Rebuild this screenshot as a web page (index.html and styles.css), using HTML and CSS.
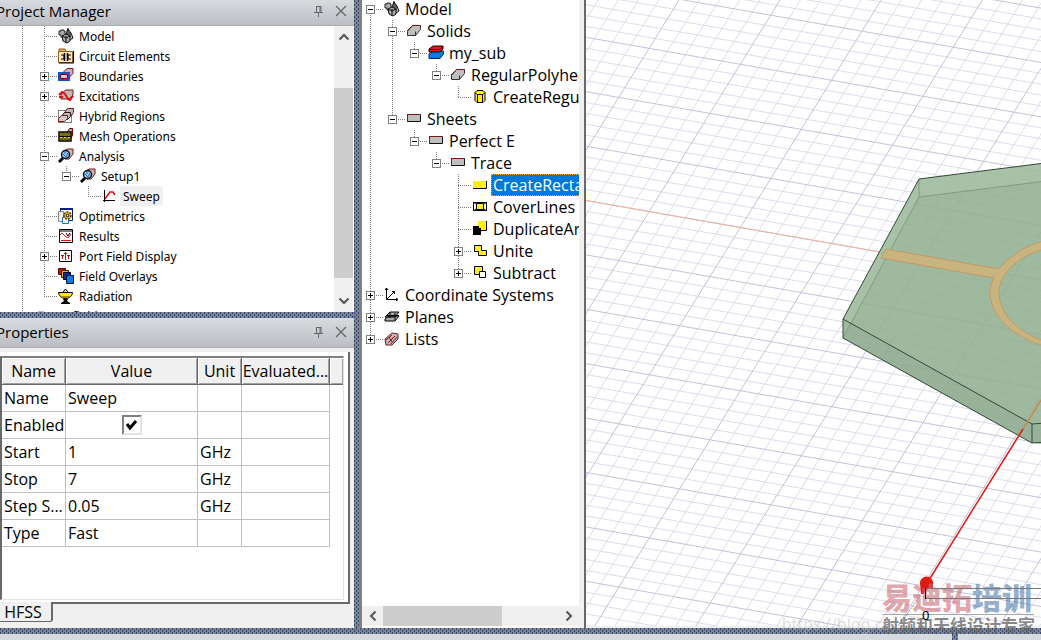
FILE: index.html
```html
<!DOCTYPE html>
<html lang="en">
<head>
<meta charset="utf-8">
<title>Project Manager</title>
<link rel="stylesheet" href="styles.css">
</head>
<body>
<svg class="defs" aria-hidden="true">
  <symbol id="i-model" viewBox="0 0 16 16"><path d="M1 3h2V2h3v1h1v3h1v5H5V9H3V7H1z" fill="#aaa" stroke="#222"/><path d="M10 1l3 4 2 5-3 2-4-3 1-6z" fill="#bbb" stroke="#111"/><path d="M4 8l4-2 4 2v5l-3 2-4-2zM4 8l4 2 4-2M8 10v5" fill="#aaa" stroke="#111"/><path d="M10 0v7M12 4v5" stroke="#000"/></symbol>
  <symbol id="i-circuit" viewBox="0 0 16 16"><path d="M1 3V1h6l1 2" fill="#e8b060" stroke="#8a5510"/><path d="M.5 3.500h14v11H.5z" fill="#ffe9c4" stroke="#9a5b10"/><path d="M1 15h14.500V3" fill="none" stroke="#000"/><path d="M3 7h3v4H3M13 7h-3v4h3" fill="none" stroke="#000"/><path d="M6.500 5v8M9.500 5v8" fill="none" stroke="#000" stroke-width="1.500"/></symbol>
  <symbol id="i-bound" viewBox="0 0 16 16"><path d="M5 4.500l4-4h6v5l-4 4z" fill="#bbb" stroke="#801515"/><path d="M1 5h10v7H1z" fill="#bbb" stroke="#0755c8" stroke-width="2"/><path d="M2.500 6.500h7v4h-7z" fill="#ccc" stroke="#700"/></symbol>
  <symbol id="i-excite" viewBox="0 0 16 16"><path d="M3 6l5-4h7v5l-4 4H3z" fill="#bbb" stroke="#801515"/><path d="M1 7l3-3 3 2 3 5 2 1 3-4M1 9h4" fill="none" stroke="#e01010" stroke-width="2"/></symbol>
  <symbol id="i-hybrid" viewBox="0 0 16 16"><path d="M.5 2.500h13v12H.5z" fill="none" stroke="#000" stroke-dasharray="1 1"/><path d="M6.500 4.500l3-4h6v4l-3 4h-6z" fill="#bbb" stroke="#801515"/><path d="M3.500 8.500l3-4h6v4l-3 3h-6z" fill="#bbb" stroke="#301010"/><path d="M.5 10.500l3-3h6v3l-3 3h-6z" fill="#ccc" stroke="#801515"/></symbol>
  <symbol id="i-mesh" viewBox="0 0 16 16"><path d="M9.500 3.500l2-3h3v7l-2 3z" fill="#aaa" stroke="#700"/><path d="M1 4h12v9H1z" fill="#f5e51e" stroke="#000" stroke-width="1.500"/><path d="M1 8.500h12M5 4v9M9 4v9" stroke="#000"/><path d="M2 5l2 3M4 5L2 8M6 5l2 3M8 5L6 8M10 5l2 3M12 5l-2 3M2 10l2 2M4 10l-2 2M6 10l2 2M8 10l-2 2M10 10l2 2M12 10l-2 2" stroke="#000" stroke-opacity=".6"/></symbol>
  <symbol id="i-analysis" viewBox="0 0 16 16"><path d="M5 4l4-3h6v5l-4 5H7z" fill="#bbb" stroke="#801515"/><circle cx="7.500" cy="6.500" r="4" fill="#9cc9f0" stroke="#111" stroke-width="1.500"/><path d="M5 6l3 3 2-4M7 3v3" fill="none" stroke="#1565c0"/><path d="M5 10l-4 4" stroke="#000" stroke-width="3"/></symbol>
  <symbol id="i-sweep" viewBox="0 0 16 16"><path d="M2.500 2v12M1 12.500h12" fill="none" stroke="#000"/><path d="M3 11l2-3 3-4h3l2 3" fill="none" stroke="#e01010" stroke-width="1.500"/></symbol>
  <symbol id="i-opti" viewBox="0 0 16 16"><path d="M2.500 1.500h12v11h-12z" fill="#fff" stroke="#051b70"/><path d="M2 1h13" stroke="#06227e" stroke-width="2"/><path d="M.5 3.500h5v10h-5z" fill="#eee" stroke="#888"/><path d="M4.500 9.500h6v6h-6z" fill="#fff" stroke="#147cc0"/><circle cx="9.500" cy="7.500" r="3.500" fill="#f7c51e" stroke="#4a3000" stroke-dasharray="2 1" stroke-width="1.500"/><circle cx="9.500" cy="7.500" r="1.300" fill="#fff" stroke="#000"/></symbol>
  <symbol id="i-results" viewBox="0 0 16 16"><path d="M1.500 1.500h13v13h-13z" fill="#fff" stroke="#000"/><path d="M2 3h12" stroke="#000"/><path d="M2 7l2-2 3 3 3 2 3-4M3 12.500h10" fill="none" stroke="#e01010"/><path d="M8 5l2 3 2-3" fill="none" stroke="#000"/></symbol>
  <symbol id="i-port" viewBox="0 0 16 16"><path d="M1.500 2.500h12v11h-12z" fill="#fff" stroke="#000"/><path d="M4.500 11V7M7.500 12V4M10.500 11V7" stroke="#d00"/><path d="M3 7.500h3M6 5.500h3M9 7.500h3" stroke="#d00"/></symbol>
  <symbol id="i-overlay" viewBox="0 0 16 16"><path d="M.5.5h7v6h-7z" fill="#b51c14" stroke="#600"/><path d="M3.500 2.500h7v7h-7z" fill="#f0b51e" stroke="#320"/><path d="M5.500 4.500h7v7h-7z" fill="#0a2a9b" stroke="#001"/><path d="M8.500 7.500h7v8h-7z" fill="#087ce0" stroke="#013"/></symbol>
  <symbol id="i-rad" viewBox="0 0 16 16"><path d="M.5 4.500h14c0 3-3 5-5 6h-4c-2-1-5-3-5-6z" fill="#ffed00" stroke="#000"/><path d="M3 8h9l-2 2H5z" fill="#b08300"/><path d="M5 4l2.500-3L10 4" fill="#ffed00" stroke="#000"/><path d="M5 11h5l-1 2 3 2v1H3v-1l3-2z" fill="#000"/></symbol>
  <symbol id="i-folder" viewBox="0 0 16 16"><path d="M1 5h14v9H1z" fill="#ddd" stroke="#555"/><path d="M2 4h6l2 3H1z" fill="#ece23c" stroke="#777"/></symbol>
  <symbol id="i-solid" viewBox="0 0 16 16"><path d="M1.500 8.500l5-6h8v4l-5 6h-8z" fill="#bfbfbf" stroke="#333"/><path d="M1 8l5.500-5.500h8M9.500 8.500v4" fill="none" stroke="#801515"/></symbol>
  <symbol id="i-sub" viewBox="0 0 16 16"><path d="M1 9l4-3h10.500v3L12 13.500H1z" fill="#0a79e0" stroke="#05247a"/><path d="M1 4l4-3h10v3l-3 3H1z" fill="#e01b12" stroke="#200"/><path d="M1 4.500h11l3-3" fill="none" stroke="#400"/></symbol>
  <symbol id="i-poly" viewBox="0 0 16 16"><path d="M3 3.500l2-2h6l2 2v8l-2 2H5l-2-2z" fill="#ffed1e" stroke="#000"/><path d="M3 3.500l2 2h6l2-2M5.500 5v9M10.500 5v9" fill="none" stroke="#000"/></symbol>
  <symbol id="i-sheet" viewBox="0 0 16 16"><path d="M1.500 3.500h13v7h-13z" fill="#bfbfbf" stroke="#111"/><path d="M1 3.500h13M1.500 3v8" stroke="#801515"/></symbol>
  <symbol id="i-rect" viewBox="0 0 16 16"><path d="M1 4h13v7H1z" fill="#ffed1e"/><path d="M1 11.500h13.500V4" fill="none" stroke="#000"/></symbol>
  <symbol id="i-cover" viewBox="0 0 16 16"><path d="M1.500 3.500h13v8h-13z" fill="#fff" stroke="#000"/><path d="M4.500 4.500h7v6h-7z" fill="#ffed1e" stroke="#000"/><path d="M1 3l3 2M15 3l-3 2M1 12l3-2M15 12l-3-2" stroke="#000"/></symbol>
  <symbol id="i-dup" viewBox="0 0 16 16"><path d="M6 0h9v9H6z" fill="#ffed1e"/><path d="M14.500 0v9.500H9" fill="none" stroke="#000"/><path d="M1 5h6v2h2v7H1z" fill="#000"/></symbol>
  <symbol id="i-unite" viewBox="0 0 16 16"><path d="M2.500 2.500h7v5h5v5h-8v-4h-4z" fill="#ffed1e" stroke="#000"/></symbol>
  <symbol id="i-subtract" viewBox="0 0 16 16"><path d="M2.500 1.500h8v8h-8z" fill="#ffed1e" stroke="#000"/><path d="M7.500 6.500h6v6h-6z" fill="#fff" stroke="#000"/></symbol>
  <symbol id="i-cs" viewBox="0 0 16 16"><path d="M2.500 1v11.500H14M3 12l7-7M1 3l1.500-2L4 3M8 4.500h2.500V7M12 11l2 1.500-2 1.500" fill="none" stroke="#000"/></symbol>
  <symbol id="i-planes" viewBox="0 0 16 16"><path d="M1 10l4-3h10l-4 5H1zM1 8l5-5h9l-4 5z" fill="#aaa" stroke="#000"/><path d="M2 6.500h13M6 3v6M11 4v7" stroke="#000"/></symbol>
  <symbol id="i-lists" viewBox="0 0 16 16"><path d="M1 8l7-6 6 1v5l-6 6H2z" fill="#bbb" stroke="#801515"/><path d="M2 9l6-5M4 12l7-7M7 13l6-7M5 6l3 5" stroke="#8a1010"/></symbol>
  <symbol id="i-pin" viewBox="0 0 12 12"><path d="M3 1.500h5M3.500 1v6M7 1v6M8 1v6M1 7.500h9M5.500 8v4" fill="none" stroke="#666"/></symbol>
  <symbol id="i-close" viewBox="0 0 12 12"><path d="M1 1l10 10M11 1L1 11" fill="none" stroke="#666" stroke-width="1.300"/></symbol>
  <symbol id="i-chev" viewBox="0 0 12 12"><path d="M1.500 8.500L6 4l4.500 4.500" fill="none" stroke="#555" stroke-width="2"/></symbol>
</svg>

<div class="app">
  <main class="work">
    <aside class="side">
      <section class="pm">
        <header class="bar"><h2>Project Manager</h2><button aria-label="Pin"><svg><use href="#i-pin"/></svg></button><button aria-label="Close"><svg><use href="#i-close"/></svg></button></header>
        <div class="pm-body">
          <ul class="tree small">
            <li><i class="v"></i><i class="t"></i><svg><use href="#i-model"/></svg><span>Model</span></li>
            <li><i class="v"></i><i class="t"></i><svg><use href="#i-circuit"/></svg><span>Circuit Elements</span></li>
            <li><i class="v"></i><i class="t"><b class="plus"></b></i><svg><use href="#i-bound"/></svg><span>Boundaries</span></li>
            <li><i class="v"></i><i class="t"><b class="plus"></b></i><svg><use href="#i-excite"/></svg><span>Excitations</span></li>
            <li><i class="v"></i><i class="t"></i><svg><use href="#i-hybrid"/></svg><span>Hybrid Regions</span></li>
            <li><i class="v"></i><i class="t"></i><svg><use href="#i-mesh"/></svg><span>Mesh Operations</span></li>
            <li><i class="v"></i><i class="t"><b></b></i><svg><use href="#i-analysis"/></svg><span>Analysis</span></li>
            <li><i class="v"></i><i class="v"></i><i class="l"><b></b></i><svg><use href="#i-analysis"/></svg><span>Setup1</span></li>
            <li><i class="v"></i><i class="v"></i><i></i><i class="l"></i><svg><use href="#i-sweep"/></svg><span class="soft">Sweep</span></li>
            <li><i class="v"></i><i class="t"></i><svg><use href="#i-opti"/></svg><span>Optimetrics</span></li>
            <li><i class="v"></i><i class="t"></i><svg><use href="#i-results"/></svg><span>Results</span></li>
            <li><i class="v"></i><i class="t"><b class="plus"></b></i><svg><use href="#i-port"/></svg><span>Port Field Display</span></li>
            <li><i class="v"></i><i class="t"></i><svg><use href="#i-overlay"/></svg><span>Field Overlays</span></li>
            <li><i class="v"></i><i class="l"></i><svg><use href="#i-rad"/></svg><span>Radiation</span></li>
            <li><i class="l"></i><svg><use href="#i-folder"/></svg><span>Definitions</span></li>
          </ul>
          <div class="vscroll"><button aria-label="Scroll up"><svg><use href="#i-chev"/></svg></button><div class="track"><div class="thumb"></div></div><button class="down" aria-label="Scroll down"><svg><use href="#i-chev"/></svg></button></div>
        </div>
      </section>
      <div class="hatch row"></div>
      <section class="props">
        <header class="bar tall"><h2>Properties</h2><button aria-label="Pin"><svg><use href="#i-pin"/></svg></button><button aria-label="Close"><svg><use href="#i-close"/></svg></button></header>
        <div class="sheet">
          <div class="sheet-in">
          <table>
            <colgroup><col class="c1"><col class="c2"><col class="c3"><col class="c4"><col></colgroup>
            <thead><tr><th>Name</th><th>Value</th><th>Unit</th><th>Evaluated...</th><th></th></tr></thead>
            <tbody>
              <tr><td>Name</td><td>Sweep</td><td></td><td></td><td></td></tr>
              <tr><td><label for="en">Enabled</label></td><td class="mid"><input id="en" type="checkbox" checked></td><td></td><td></td><td></td></tr>
              <tr><td>Start</td><td>1</td><td>GHz</td><td></td><td></td></tr>
              <tr><td>Stop</td><td>7</td><td>GHz</td><td></td><td></td></tr>
              <tr><td>Step S...</td><td>0.05</td><td>GHz</td><td></td><td></td></tr>
              <tr><td>Type</td><td>Fast</td><td></td><td></td><td></td></tr>
            </tbody>
          </table>
          </div>
        </div>
        <div class="tabs"><button class="tab">HFSS</button></div>
      </section>
    </aside>
    <div class="hatch col"></div>
    <section class="model">
      <ul class="tree big">
        <li><i class="f"><b></b></i><svg><use href="#i-model"/></svg><span>Model</span></li>
        <li><i class="v"></i><i class="t"><b></b></i><svg><use href="#i-solid"/></svg><span>Solids</span></li>
        <li><i class="v"></i><i class="v"></i><i class="l"><b></b></i><svg><use href="#i-sub"/></svg><span>my_sub</span></li>
        <li><i class="v"></i><i class="v"></i><i></i><i class="l"><b></b></i><svg><use href="#i-solid"/></svg><span>RegularPolyhedron</span></li>
        <li><i class="v"></i><i class="v"></i><i></i><i></i><i class="l"></i><svg><use href="#i-poly"/></svg><span>CreateRegularPolyhedron</span></li>
        <li><i class="v"></i><i class="l"><b></b></i><svg><use href="#i-sheet"/></svg><span>Sheets</span></li>
        <li><i class="v"></i><i></i><i class="l"><b></b></i><svg><use href="#i-sheet"/></svg><span>Perfect E</span></li>
        <li><i class="v"></i><i></i><i></i><i class="l"><b></b></i><svg><use href="#i-sheet"/></svg><span>Trace</span></li>
        <li><i class="v"></i><i></i><i></i><i></i><i class="t"></i><svg><use href="#i-rect"/></svg><span class="sel">CreateRectangle</span></li>
        <li><i class="v"></i><i></i><i></i><i></i><i class="t"></i><svg><use href="#i-cover"/></svg><span>CoverLines</span></li>
        <li><i class="v"></i><i></i><i></i><i></i><i class="t"></i><svg><use href="#i-dup"/></svg><span>DuplicateAroundAxis</span></li>
        <li><i class="v"></i><i></i><i></i><i></i><i class="t"><b class="plus"></b></i><svg><use href="#i-unite"/></svg><span>Unite</span></li>
        <li><i class="v"></i><i></i><i></i><i></i><i class="l"><b class="plus"></b></i><svg><use href="#i-subtract"/></svg><span>Subtract</span></li>
        <li><i class="t"><b class="plus"></b></i><svg><use href="#i-cs"/></svg><span>Coordinate Systems</span></li>
        <li><i class="t"><b class="plus"></b></i><svg><use href="#i-planes"/></svg><span>Planes</span></li>
        <li><i class="l"><b class="plus"></b></i><svg><use href="#i-lists"/></svg><span>Lists</span></li>
      </ul>
      <div class="hscroll"><button class="left" aria-label="Scroll left"><svg><use href="#i-chev"/></svg></button><div class="htrack"><div class="hthumb"></div></div><button class="right" aria-label="Scroll right"><svg><use href="#i-chev"/></svg></button></div>
    </section>
    <section class="view">
      <svg class="scene" role="img" aria-label="3D model view">
        <path id="minor" class="minor"/><path id="major" class="major"/>
        <path d="M0 200.500L300 253" stroke="#eab49c"/>
        <path d="M333 179L1033 90V470L446 443L257 338V319z" fill="#8fae8f" fill-opacity=".86"/>
        <path d="M333 179L1033 90V109L333 197L257 338V319z" fill="#bdd6b8" fill-opacity=".3"/>
        <path d="M257 319L446 424L1033 380V399L446 443L257 338z" fill="#7d9c80" fill-opacity=".2"/>
        <path d="M333 179V197L1033 109M333 197L257 338" fill="none" stroke="#7f9d80"/>
        <path d="M333 179L1033 90M333 179L257 319V338L446 443L1033 399M257 319L446 424L1033 380M446 424V443" fill="none" stroke="#34483a"/>
        <path d="M300 249L413 269C420 260 434 248 455 241.700L600 215V222L455 250C431 257 413 275 413 293C413 313 431 331 455 340L600 375V382L455 345C424 335 404 314 404 292C404 287 406 282 408 278L295 258z" fill="#c9b480" stroke="#c29a66"/>
        <path d="M455 400L437 429" stroke="#c58a50" stroke-width="1.500"/>
        <path d="M437 429L343 580" stroke="#e01812" stroke-width="1.500"/>
        <path d="M334 595L316 622" stroke="#8fa58a" stroke-dasharray="2 1"/>
        <path d="M334 583a6.500 6.500 0 0 1 13 0v6h-5l-5 5h-2z" fill="#e01b12"/>
      </svg>
      <div class="wm">
        <div class="wm-url">https://blog.cs</div>
        <div class="wm-top"><span>易迪拓</span><span class="blue">培训</span></div>
        <div class="wm-sub">射频和天线设计专家</div>
        <svg class="axis"><path d="M2.500 0V11M2 10.500H120" fill="none" stroke="#777"/><path d="M2 .5H120" stroke="#777"/><path d="M2.500 0V11" stroke="#000"/></svg>
        <span class="zero">0</span>
      </div>
    </section>
  </main>
  <div class="hatch row"></div>
  <footer class="foot"><div class="foot-l"></div><div class="hatch col"></div><div class="foot-r"></div></footer>
</div>
<script src="grid.js"></script>
</body>
</html>
```
FILE: styles.css
```css
* { box-sizing: border-box; }
body { margin: 0; font-family: "Open Sans", "Noto Sans", sans-serif; color: #000; overflow: hidden; }
.defs { position: absolute; width: 0; height: 0; }
button { border: 0; padding: 0; background: none; font: inherit; display: flex; align-items: center; justify-content: center; }
.app { height: 100vh; display: flex; flex-direction: column; background: #f0f0f0; }
.work { flex: 1; display: flex; min-height: 0; }
.hatch { flex: none; background: #848484 url("data:image/svg+xml,%3Csvg xmlns='http://www.w3.org/2000/svg' width='4' height='4'%3E%3Cpath d='M0 0h1v2H0zM2 2h1v2H2z' fill='%232f4a7a'/%3E%3C/svg%3E"); }
.hatch.row { height: 6px; }
.hatch.col { width: 6px; }

.side { width: 354px; flex: none; display: flex; flex-direction: column; }
.pm { height: 312px; flex: none; display: flex; flex-direction: column; }
.bar { height: 26px; flex: none; display: flex; align-items: center; gap: 10px; padding: 0 7px 4px 0; background: linear-gradient(#d8dade, #bbbfc5); border-bottom: 1px solid #acacac; }
.bar.tall { height: 30px; padding-bottom: 1px; }
.bar h2 { margin: 0 auto 0 -4px; font-size: 15px; font-weight: 400; line-height: 20px; }
.bar svg { width: 12px; height: 12px; }
.pm-body { flex: 1; display: flex; min-height: 0; background: #fff; }

.tree { flex: 1; list-style: none; margin: 0; padding: 0; overflow: hidden; min-width: 0; }
.tree li { display: flex; align-items: center; white-space: nowrap; }
.tree svg { width: 16px; height: 16px; flex: none; }
.small { padding-left: 14px; font-family: "Noto Sans", "Open Sans", sans-serif; font-size: 12px; line-height: 20px; }
.small li { height: 20px; }
.small span { height: 20px; line-height: 22px; padding: 0 3px; margin-left: 2px; }
.big { margin-top: -2px; font-size: 16px; line-height: 20px; }
.big li { height: 22px; }
.big span { padding: 0 1px; margin-left: 3px; border: 1px solid transparent; }
.soft { background: #f0f0f0; }
.big .sel { background: #0078d7; color: #fff; border: 1px dotted #e8a030; }
.tree i { flex: none; width: 22px; align-self: stretch; display: flex; align-items: center; padding-left: 4px;
  --v: repeating-linear-gradient(#808080 0 1px, transparent 1px 2px);
  --h: repeating-linear-gradient(90deg, #808080 0 1px, transparent 1px 2px);
  background-repeat: no-repeat; }
.tree .v { background-image: var(--v); background-size: 1px 100%; background-position: 8px 0; }
.tree .t { background-image: var(--v), var(--h); background-size: 1px 100%, 14px 1px; background-position: 8px 0, 8px 50%; }
.tree .l { background-image: var(--v), var(--h); background-size: 1px 50%, 14px 1px; background-position: 8px 0, 8px 50%; }
.tree .f { background-image: var(--v), var(--h); background-size: 1px 50%, 14px 1px; background-position: 8px 100%, 8px 50%; }
.tree b { width: 9px; height: 9px; border: 1px solid #808080; background: linear-gradient(#000, #000) center / 5px 1px no-repeat #fff; }
.tree b.plus { background: linear-gradient(#000, #000) center / 5px 1px no-repeat, linear-gradient(#000, #000) center / 1px 5px no-repeat, #fff; }

.vscroll { width: 20px; flex: none; display: flex; flex-direction: column; background: #f0f0f0; border-right: 1px solid #fff; }
.vscroll button { height: 22px; }
.vscroll svg, .hscroll svg { width: 12px; height: 12px; }
.down svg { transform: rotate(180deg); }
.track { flex: 1; padding: 40px 0 12px; }
.thumb { height: 100%; background: #cdcdcd; }

.props { flex: 1; display: flex; flex-direction: column; min-height: 0; }
.sheet { flex: 1; min-height: 0; margin: 4px 4px 0 0; padding: 4px 4px 2px 0; border: solid #696969; border-width: 0 2px 2px 0; background: #fff; }
.sheet-in { height: 100%; border: 1px solid #e3e3e3; border-top: 2px solid #808080; border-left: 2px solid #696969; }
table { width: 100%; border-collapse: separate; border-spacing: 0; table-layout: fixed; font-size: 16px; line-height: 20px; }
.c1 { width: 64px; } .c2 { width: 132px; } .c3 { width: 44px; } .c4 { width: 88px; }
th { height: 27px; padding: 0 0 1px; font-weight: 400; background: #f0f0f0; border: solid #696969; border-width: 0 1px 1px 0; box-shadow: inset 1px 1px #fff, inset -1px -1px #a0a0a0; white-space: nowrap; }
td { height: 27px; padding: 0 2px 1px; border: solid #c0c0c0; border-width: 0 1px 1px 0; white-space: nowrap; }
th:last-child { border-right: 0; }
td:last-child { border: 0; }
.mid { text-align: center; }
input { appearance: none; display: block; width: 20px; height: 20px; margin: 0 auto; border: 2px solid; border-color: #808080 #e3e3e3 #e3e3e3 #808080; background: #fff; }
input:checked { background: url("data:image/svg+xml,%3Csvg xmlns='http://www.w3.org/2000/svg' width='16' height='16'%3E%3Cpath d='M3 7l3 4 6-7' fill='none' stroke='%23000' stroke-width='3'/%3E%3C/svg%3E") center no-repeat #fff; }
.tabs { height: 24px; flex: none; font-size: 16px; line-height: 17px; }
.tab { width: 53px; height: 20px; margin-top: -2px; padding: 2px 5px 0 0; background: #f0f0f0; border: solid #696969; border-width: 0 2px 1px 0; border-radius: 0 0 3px 0; }

.model { width: 226px; flex: none; display: flex; flex-direction: column; padding-bottom: 2px; background: #fff; border: solid #696969; border-width: 0 2px 0 2px; border-left-color: #808080; box-shadow: inset -5px 0 #f0f0f0; }
.model .tree { margin-right: 5px; }
.hscroll { height: 20px; flex: none; margin-right: 5px; display: flex; background: #f0f0f0; }
.hscroll button { width: 21px; }
.left svg { transform: rotate(-90deg); }
.right svg { transform: rotate(90deg); }
.htrack { flex: 1; }
.hthumb { width: 68%; height: 100%; background: #cdcdcd; }

.view { flex: 1; min-width: 0; position: relative; background: #fff; border-bottom: 2px solid #f0f0f0; }
.scene { display: block; width: 100%; height: 100%; }
.minor { fill: none; stroke: #dddced; }
.major { fill: none; stroke: #c3c2dd; }
.wm { position: absolute; right: 7px; bottom: -10px; z-index: 2; width: 152px; font-family: "Noto Sans", "Noto Sans CJK SC", sans-serif; white-space: nowrap; }
.wm-top { display: flex; font-size: 30px; line-height: 32px; font-weight: 900; color: rgba(205, 110, 120, .6); border-bottom: 1px solid #aaa; }
.wm-top .blue { color: rgba(90, 130, 175, .65); }
.wm-sub { font-size: 17px; line-height: 21px; font-weight: 700; color: rgba(100, 100, 100, .75); }
.wm-url { position: absolute; right: 100%; bottom: 0; margin-right: -8px; font-size: 16px; line-height: 24px; color: rgba(190, 190, 190, .5); }
.axis { position: absolute; left: 41px; top: 6px; width: 118px; height: 12px; }
.zero { position: absolute; left: 40px; top: 25px; font-size: 13px; line-height: 16px; }

.foot { height: 6px; flex: none; display: flex; }
.foot-l { flex: 952; background: #d6d9dd; }
.foot-r { flex: 83; background: #d6d9dd; }
```
FILE: grid.js
```js
// Isometric ground grid: every fifth line is a major one.
var minor = "", major = "";
function add(k, d) { if (k % 5 === 0) { major += d; } else { minor += d; } }
for (var k = -220; k < 140; k++) {
  add(k, "M0 " + (200.5 + k * 10.88).toFixed(1) + "l2400 420");
}
for (var j = -20; j < 160; j++) {
  add(j, "M" + (93 + j * 20.22).toFixed(1) + " 0l-866.6 1400");
}
document.getElementById("minor").setAttribute("d", minor);
document.getElementById("major").setAttribute("d", major);
```
